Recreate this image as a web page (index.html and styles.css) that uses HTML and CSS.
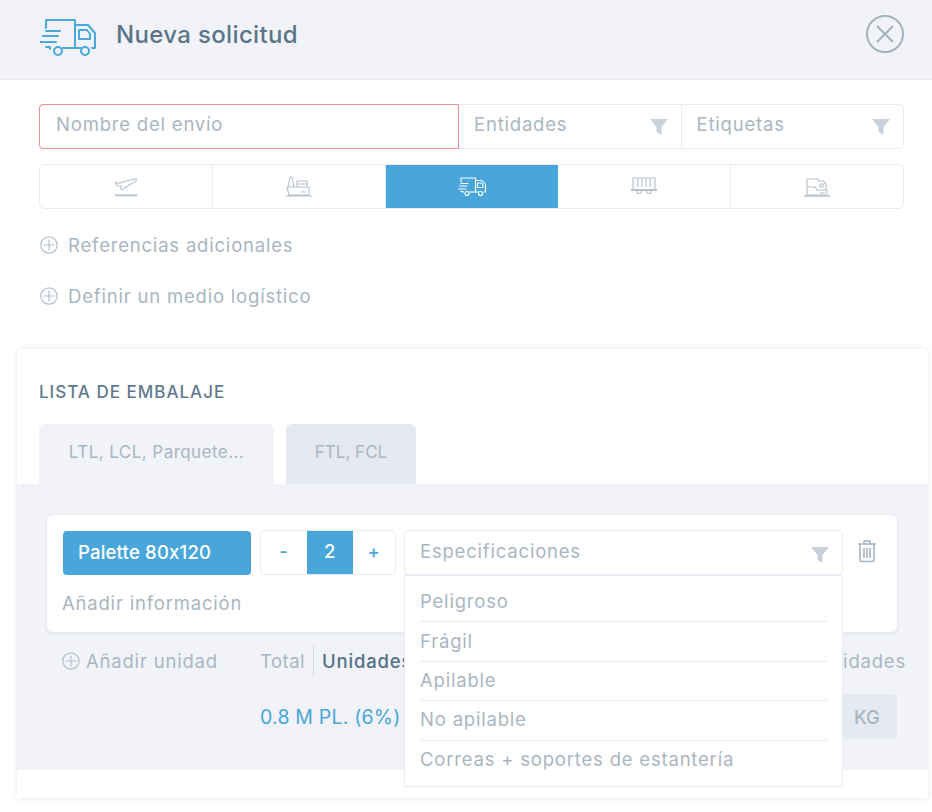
FILE: index.html
```html
<!DOCTYPE html>
<html lang="es">
<head>
  <meta charset="UTF-8" />
  <title>Nueva solicitud</title>
  <link rel="stylesheet" href="styles.css">
</head>
<body>
  <header class="top">
    <div class="top-title">
      <svg class="truck-big" width="56" height="38" viewBox="0 0 56 38" fill="none" stroke="#4aa8dc" stroke-width="2" stroke-linecap="round" stroke-linejoin="round">
        <path d="M6 9V1h29v28H23"/>
        <path d="M6 12h14M3 17h15M0 23h16M6 28h4v2"/>
        <path d="M35 6h13l7 8v15h-3M41 29h-6"/>
        <path d="M39 11h8l3 4v5H39z"/>
        <circle cx="18" cy="32" r="4"/>
        <circle cx="45" cy="32" r="4"/>
      </svg>
      <h1>Nueva solicitud</h1>
    </div>
    <svg class="close" width="40" height="40" viewBox="0 0 40 40" fill="none" stroke="#a3b2be" stroke-width="2">
      <circle cx="20" cy="20" r="18"/>
      <path d="M12 12l16 16M28 12L12 28"/>
    </svg>
  </header>

  <main class="form">
    <div class="fields">
      <input class="field-name" type="text" placeholder="Nombre del envío" />
      <div class="field-select">
        <span>Entidades</span>
        <svg class="funnel" width="18" height="18" viewBox="0 0 18 18"><path d="M0 1h18l-6.5 8v8l-5-3V9z"/></svg>
      </div>
      <div class="field-select">
        <span>Etiquetas</span>
        <svg class="funnel" width="18" height="18" viewBox="0 0 18 18"><path d="M0 1h18l-6.5 8v8l-5-3V9z"/></svg>
      </div>
    </div>

    <div class="modes">
      <div class="mode">
        <svg width="26" height="22" viewBox="0 0 28 22" fill="none" stroke="#b4c0ca" stroke-width="1.1" stroke-linejoin="round">
          <path d="M2 6l5 1 5-2 13-3c1 1 0 2-1 3L14 11l-4 3-2-1 1-3-4 0z"/>
          <path d="M2 20h24" stroke-width="1.8"/>
        </svg>
      </div>
      <div class="mode">
        <svg width="28" height="22" viewBox="0 0 28 22" fill="none" stroke="#b4c0ca" stroke-width="1.1" stroke-linejoin="round">
          <path d="M3 11l2-10h2l2 10M2 11h22v8H4zM12 11V5h10v6M12 8h10M1 20h26M16 16h5"/>
        </svg>
      </div>
      <div class="mode mode-on">
        <svg width="28" height="20" viewBox="0 0 56 38" fill="none" stroke="#fff" stroke-width="2.2" stroke-linecap="round" stroke-linejoin="round">
          <path d="M6 9V1h29v28H23"/>
          <path d="M6 12h14M3 17h15M0 23h16M6 28h4v2"/>
          <path d="M35 6h13l7 8v15h-3M41 29h-6"/>
          <path d="M39 11h8l3 4v5H39z"/>
          <circle cx="18" cy="32" r="4"/>
          <circle cx="45" cy="32" r="4"/>
        </svg>
      </div>
      <div class="mode">
        <svg width="28" height="22" viewBox="0 0 28 22" fill="none" stroke="#b4c0ca" stroke-width="1.1" stroke-linejoin="round">
          <path d="M3 2h22v12H3zM8 2v9M12 2v9M16 2v9M20 2v9"/>
          <path d="M1 14h26" stroke-width="1.8"/>
          <path d="M6.5 15a2.5 2.5 0 0 0 5 0M16.500 15a2.500 2.500 0 0 0 5 0"/>
        </svg>
      </div>
      <div class="mode">
        <svg width="28" height="22" viewBox="0 0 28 22" fill="none" stroke="#b4c0ca" stroke-width="1.1" stroke-linejoin="round">
          <path d="M4 11V3h11v2h5l3 3v6M4 11h8l2 3h10v5H4zM17 8h3v3h-3zM17 17h5"/>
          <path d="M1 20h26" stroke-width="1.6"/>
        </svg>
      </div>
    </div>

    <div class="link-row">
      <svg class="plus" width="18" height="18" viewBox="0 0 18 18" fill="none" stroke="#b4c0ca" stroke-width="1.2"><circle cx="9" cy="9" r="8.2"/><path d="M9 3.5v11M3.5 9h11"/></svg>
      <span>Referencias adicionales</span>
    </div>
    <div class="link-row link-row-2">
      <svg class="plus" width="18" height="18" viewBox="0 0 18 18" fill="none" stroke="#b4c0ca" stroke-width="1.2"><circle cx="9" cy="9" r="8.2"/><path d="M9 3.5v11M3.5 9h11"/></svg>
      <span>Definir un medio logístico</span>
    </div>
  </main>

  <section class="packing">
    <h2>LISTA DE EMBALAJE</h2>
    <div class="tabs">
      <div class="tab tab-on">LTL, LCL, Parquete...</div>
      <div class="tab tab-off">FTL, FCL</div>
    </div>

    <div class="panel">
      <div class="unit">
        <div class="unit-row">
          <div class="unit-type">Palette 80x120</div>
          <div class="stepper">
            <span class="step step-minus">-</span>
            <span class="step-value">2</span>
            <span class="step">+</span>
          </div>
          <div class="specs">
            <div class="specs-box">
              <span>Especificaciones</span>
              <svg class="funnel" width="18" height="18" viewBox="0 0 18 18"><path d="M0 1h18l-6.5 8v8l-5-3V9z"/></svg>
            </div>
            <ul class="specs-menu">
              <li>Peligroso</li>
              <li>Frágil</li>
              <li>Apilable</li>
              <li>No apilable</li>
              <li>Correas + soportes de estantería</li>
            </ul>
          </div>
          <svg class="trash" width="20" height="24" viewBox="0 0 20 24" fill="none" stroke="#a3b2be" stroke-width="1.5" stroke-linejoin="round">
            <path d="M1 5h18M7 5V2h6v3M3 5v16a1.5 1.5 0 0 0 1.5 1.5h11A1.5 1.5 0 0 0 17 21V5M7 9v10M10 9v10M13 9v10"/>
          </svg>
        </div>
        <div class="unit-info">Añadir información</div>
      </div>

      <div class="totals">
        <div class="add-unit">
          <svg class="plus" width="18" height="18" viewBox="0 0 18 18" fill="none" stroke="#b4c0ca" stroke-width="1.2"><circle cx="9" cy="9" r="8.2"/><path d="M9 3.5v11M3.5 9h11"/></svg>
          <span>Añadir unidad</span>
        </div>
        <div class="totals-main">
          <div class="totals-head">
            <span class="totals-label">Total</span>
            <span class="totals-bold">Unidades</span>
            <span class="totals-end">Unidades</span>
          </div>
          <div class="totals-values">
            <span class="totals-blue">0.8 M PL. (6%)</span>
            <span class="unit-tag">KG</span>
          </div>
        </div>
      </div>
    </div>
  </section>
</body>
</html>
```

FILE: styles.css
```css
* {
  box-sizing: border-box;
}
body {
  margin: 0;
  background-color: #fff;
  font-family: 'Inter', 'Open Sans', sans-serif;
  font-feature-settings: "calt" 0;
  font-size: 18.5px;
  letter-spacing: 0.8px;
  color: #a9b6c2;
  height: 812px;
  overflow: hidden;
}
.top {
  height: 80px;
  background-color: #f1f3f8;
  border-bottom: 1px solid #e8ebf3;
  display: flex;
  align-items: center;
  justify-content: space-between;
  padding: 0 27px 11px 40px;
}
.top-title {
  display: flex;
  align-items: center;
  gap: 20px;
}
.truck-big {
  margin-top: 7px;
}
.top h1 {
  margin: 0;
  font-size: 24px;
  font-weight: 500;
  letter-spacing: 0.35px;
  color: #5a7589;
}
.form {
  padding: 24px 28px 0 39px;
}
.fields {
  display: flex;
  height: 45px;
}
.field-name {
  width: 420px;
  height: 45px;
  border: 1.5px solid #f58d97;
  border-radius: 4px 0 0 4px;
  padding: 0 16px 6px;
  font: inherit;
  letter-spacing: inherit;
  outline: none;
}
.field-name::placeholder {
  color: #a9b6c2;
  opacity: 1;
}
.field-select {
  flex: 1;
  display: flex;
  align-items: center;
  justify-content: space-between;
  padding: 0 13px 6px 15px;
  border: 1px solid #e8ebf3;
  border-left: none;
}
.field-select:last-child {
  border-radius: 0 5px 5px 0;
}
.funnel {
  fill: #c8d1da;
  flex-shrink: 0;
  margin-top: 7px;
}
.modes {
  display: flex;
  height: 45px;
  margin-top: 15px;
  border: 1px solid #e8ebf3;
  border-radius: 5px;
  overflow: hidden;
}
.mode {
  flex: 1;
  display: flex;
  align-items: center;
  justify-content: center;
  border-right: 1px solid #e8ebf3;
}
.mode:last-child {
  border-right: none;
}
.mode-on {
  background-color: #48a6da;
  border-right: none;
}
.link-row {
  display: flex;
  align-items: center;
  gap: 10px;
  margin-top: 26px;
  padding-left: 1px;
  height: 20px;
}
.link-row-2 {
  margin-top: 31px;
}
.packing {
  margin: 43px 4px 0 17px;
  height: 449px;
  background-color: #fff;
  border-radius: 6px 6px 0 0;
  box-shadow: 0 0 6px rgba(90, 110, 140, 0.16);
}
.packing h2 {
  margin: 0;
  padding: 33px 0 0 22px;
  height: 75px;
  font-size: 17px;
  font-weight: 500;
  letter-spacing: 1px;
  color: #5f7a8f;
}
.tabs {
  display: flex;
  gap: 12px;
  padding-left: 22px;
  height: 60px;
}
.tab {
  display: flex;
  align-items: center;
  justify-content: center;
  border-radius: 6px 6px 0 0;
  padding-bottom: 4px;
  white-space: nowrap;
  font-size: 17px;
  letter-spacing: 0.2px;
}
.tab-on {
  width: 235px;
  background-color: #f1f3f8;
  letter-spacing: 0.45px;
}
.tab-off {
  width: 130px;
  background-color: #e5e9f2;
  letter-spacing: 0;
}
.panel {
  height: 286px;
  padding: 31px 31px 0 30px;
  background-color: #f1f3f8;
}
.unit {
  height: 117px;
  padding: 15px 16px 0;
  background-color: #fff;
  border-radius: 6px;
  box-shadow: 0 1px 4px rgba(90, 110, 140, 0.14);
}
.unit-row {
  display: flex;
  align-items: flex-start;
}
.unit-type {
  width: 188px;
  height: 44px;
  margin-top: 1px;
  padding: 0 0 3px 15px;
  display: flex;
  align-items: center;
  background-color: #48a6da;
  border-radius: 4px;
  color: #fff;
  font-weight: 500;
  letter-spacing: 0.2px;
}
.stepper {
  display: flex;
  width: 136px;
  height: 45px;
  margin-left: 9px;
  border: 1px solid #e8ebf3;
  border-radius: 5px;
  overflow: hidden;
}
.step {
  flex: 1;
  display: flex;
  align-items: center;
  justify-content: center;
  padding-bottom: 3px;
  color: #48a6da;
  font-weight: 500;
}
.step-minus {
  flex: none;
  width: 46px;
}
.step-value {
  width: 46px;
  display: flex;
  align-items: center;
  justify-content: center;
  padding-bottom: 3px;
  background-color: #48a6da;
  color: #fff;
  font-weight: 500;
}
.specs {
  position: relative;
  width: 439px;
  margin-left: 8px;
}
.specs-box {
  height: 45px;
  display: flex;
  align-items: center;
  justify-content: space-between;
  padding: 0 13px 3px 15px;
  border: 1px solid #e8ebf3;
  border-radius: 5px;
}
.specs-menu {
  position: absolute;
  top: 45px;
  left: 0;
  z-index: 5;
  width: 439px;
  height: 212px;
  margin: 0;
  padding: 7px 15px 0;
  list-style: none;
  background-color: #fff;
  border: 1px solid #e8ebf3;
}
.specs-menu li {
  height: 39.4px;
  display: flex;
  align-items: center;
  padding-bottom: 2px;
  border-bottom: 1px solid #e8ebf3;
}
.specs-menu li:last-child {
  border-bottom: none;
}
.trash {
  margin: 9px 0 0 14px;
}
.unit-info {
  margin: 17px 0 0 -1px;
}
.totals {
  display: flex;
  padding: 18px 0 0 15px;
}
.add-unit {
  width: 198px;
  height: 22px;
  display: flex;
  align-items: center;
  gap: 6px;
}
.totals-main {
  flex: 1;
  min-width: 0;
}
.totals-head {
  display: flex;
  align-items: center;
  height: 22px;
  margin-right: -9px;
}
.totals-label {
  padding-right: 8px;
  border-right: 1px solid #d5dbe4;
  line-height: 30px;
  letter-spacing: 0.5px;
}
.totals-bold {
  margin-left: 8px;
  font-weight: 500;
  color: #557187;
}
.totals-end {
  margin-left: auto;
}
.totals-values {
  display: flex;
  align-items: center;
  justify-content: space-between;
  margin-top: 22px;
}
.totals-blue {
  font-size: 19.5px;
  letter-spacing: 0.2px;
  color: #48a6da;
}
.unit-tag {
  width: 54px;
  height: 45px;
  display: flex;
  align-items: center;
  justify-content: center;
  padding-right: 6px;
  background-color: #e5e9f2;
  border-radius: 0 5px 5px 0;
  font-weight: 500;
  letter-spacing: 0;
}
```
